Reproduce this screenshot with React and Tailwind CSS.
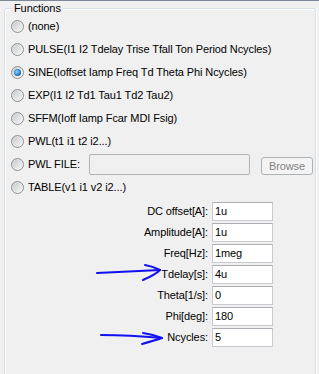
import React from "react";

function Radio({ checked }) {
  return (
    <div className="w-[13px] h-[13px] rounded-full border border-[#8c8e91] bg-[linear-gradient(135deg,#d4d4d4,#ffffff)] flex items-center justify-center shrink-0">
      <div className="w-[9px] h-[9px] rounded-full bg-[linear-gradient(135deg,#c9cbcd,#f4f4f4)] flex items-center justify-center">
        {checked && (
          <div className="w-[7px] h-[7px] rounded-full bg-[radial-gradient(circle_at_40%_40%,#8fd4ff,#2a7fc8_55%,#10508f)]" />
        )}
      </div>
    </div>
  );
}

function RadioRow({ label, checked, labelClass = "", children }) {
  return (
    <div className="h-[23px] flex items-center">
      <Radio checked={checked} />
      <span className={"ml-[4px] whitespace-nowrap " + labelClass}>{label}</span>
      {children}
    </div>
  );
}

function Field({ label, value }) {
  return (
    <div className="flex items-center h-[19px]">
      <div className="w-[203px] text-right whitespace-nowrap">{label}</div>
      <div className="ml-[4px] w-[61px] h-[19px] border border-[#c7cbd1] border-t-[#abadb3] bg-white flex items-center pl-[2px]">
        {value}
      </div>
    </div>
  );
}

export default function App() {
  return (
    <div className="relative w-[319px] h-[374px] overflow-hidden bg-[#f0f0f0] border-t border-[#7d8798] text-black text-[11px] leading-none tracking-[-0.1px] font-['Liberation_Sans',Arial,sans-serif]">
      <div className="relative mt-[7px] ml-[4px] w-[312px] h-[366px] border border-b-0 border-[#d5dfe5] rounded-tl-[3px] rounded-tr-[3px] shadow-[inset_1px_1px_0_#ffffff,1px_0_0_#ffffff]">
        <div className="absolute left-[7px] top-[-8px] bg-[#f0f0f0] px-[2px] h-[15px] flex items-center">
          Functions
        </div>
        <div className="pt-[6px] pl-[6px] flex flex-col">
          <RadioRow label="(none)" />
          <RadioRow label="PULSE(I1 I2 Tdelay Trise Tfall Ton Period Ncycles)" />
          <RadioRow label="SINE(Ioffset Iamp Freq Td Theta Phi Ncycles)" checked />
          <RadioRow label="EXP(I1 I2 Td1 Tau1 Td2 Tau2)" />
          <RadioRow label="SFFM(Ioff Iamp Fcar MDI Fsig)" />
          <RadioRow label="PWL(t1 i1 t2 i2...)" />
          <RadioRow label="PWL FILE:" labelClass="w-[57px]">
            <div className="ml-[4px] w-[161px] h-[21px] border border-[#b4b4b4] rounded-[2px] bg-[#f0f0f0]" />
            <div className="ml-[11px] w-[52px] h-[18px] mt-[3px] border border-[#adb2b5] rounded-[3px] bg-[#f4f4f4] text-[#838383] flex items-center justify-center">
              Browse
            </div>
          </RadioRow>
          <RadioRow label="TABLE(v1 i1 v2 i2...)" />
        </div>
        <div className="mt-[3px] flex flex-col gap-[2px]">
          <Field label="DC offset[A]:" value="1u" />
          <Field label="Amplitude[A]:" value="1u" />
          <Field label="Freq[Hz]:" value="1meg" />
          <Field label="Tdelay[s]:" value="4u" />
          <Field label="Theta[1/s]:" value="0" />
          <Field label="Phi[deg]:" value="180" />
          <Field label="Ncycles:" value="5" />
        </div>
      </div>
      <svg className="absolute left-0 top-0 pointer-events-none" width="319" height="374" viewBox="0 0 319 374" fill="none">
        <path d="M97 272 C115 271 135 270 160 269" stroke="#1010f0" strokeWidth="2" strokeLinecap="round" />
        <path d="M145 264 C151 265 156 267 160 269 C156 273 150 276 143 279" stroke="#1010f0" strokeWidth="2" strokeLinecap="round" strokeLinejoin="round" />
        <path d="M101 334 C120 334 140 335 162 337" stroke="#1010f0" strokeWidth="2" strokeLinecap="round" />
        <path d="M143 332 C150 333 157 335 162 337 C156 339 149 341 142 343" stroke="#1010f0" strokeWidth="2" strokeLinecap="round" strokeLinejoin="round" />
      </svg>
    </div>
  );
}
